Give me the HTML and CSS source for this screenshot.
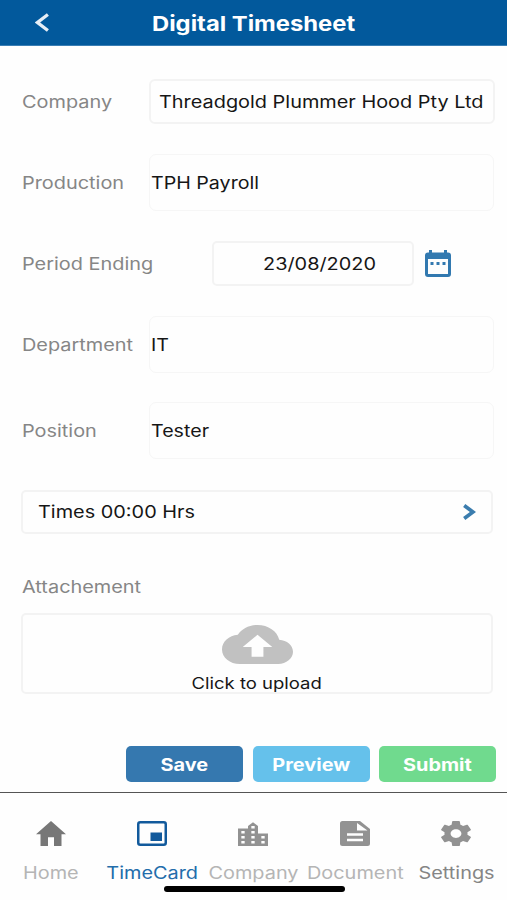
FILE: index.html
```
<!DOCTYPE html>
<html lang="en">
<head>
<meta charset="utf-8">
<title>Digital Timesheet</title>
<link rel="stylesheet" href="styles.css">
</head>
<body>
<div class="app">
  <header class="header">
    <svg class="back" viewBox="0 0 14 19" preserveAspectRatio="none"><path d="M12.900 1.500 2.500 9.500l10.400 8" fill="none" stroke="#e6eef6" stroke-width="3.300"/></svg>
    <h1 class="title"><span class="wide">Digital Timesheet</span></h1>
  </header>

  <main class="form">
    <div class="row">
      <label class="label"><span class="wide left">Company</span></label>
      <div class="field select"><span class="wide left">Threadgold Plummer Hood Pty Ltd</span></div>
    </div>
    <div class="row">
      <label class="label"><span class="wide left">Production</span></label>
      <div class="field tall"><span class="wide left">TPH Payroll</span></div>
    </div>
    <div class="row period">
      <label class="label"><span class="wide left">Period Ending</span></label>
      <div class="field date"><span class="wide left">23/08/2020</span></div>
      <svg class="calendar" viewBox="0 0 26 27" preserveAspectRatio="none">
        <path fill="#3279b0" fill-rule="evenodd" d="M4 0h3v2.5h12V0h3v2.5h1a3 3 0 0 1 3 3V24a3 3 0 0 1-3 3H3a3 3 0 0 1-3-3V5.500a3 3 0 0 1 3-3h1zM3 9v15h20V9z"/>
        <path fill="#3279b0" d="M5.500 12h3v3h-3zM11.500 12h3v3h-3zM17.500 12h3v3h-3z"/>
      </svg>
    </div>
    <div class="row">
      <label class="label"><span class="wide left">Department</span></label>
      <div class="field tall"><span class="wide left">IT</span></div>
    </div>
    <div class="row position">
      <label class="label"><span class="wide left">Position</span></label>
      <div class="field tall"><span class="wide left">Tester</span></div>
    </div>
    <div class="times">
      <span class="wide left">Times 00:00 Hrs</span>
      <svg class="chevron" viewBox="0 0 13 16" preserveAspectRatio="none"><path d="M1.200 1.500 10 8l-8.800 6.500" fill="none" stroke="#3b7dae" stroke-width="3.700"/></svg>
    </div>
    <div class="attach-label"><span class="wide left">Attachement</span></div>
    <div class="upload">
      <svg class="cloud" viewBox="0 4 24 16" preserveAspectRatio="none"><path fill="#c1c1c1" d="M19.350 10.040C18.670 6.590 15.640 4 12 4 9.110 4 6.600 5.640 5.350 8.040 2.340 8.360 0 10.910 0 14c0 3.310 2.690 6 6 6h13c2.760 0 5-2.240 5-5 0-2.640-2.050-4.780-4.650-4.960zM14 13v4h-4v-4H7l5-5 5 5h-3z"/></svg>
      <span class="wide upload-text">Click to upload</span>
    </div>
    <div class="actions">
      <button class="btn save"><span class="wide">Save</span></button>
      <button class="btn preview"><span class="wide">Preview</span></button>
      <button class="btn submit"><span class="wide">Submit</span></button>
    </div>
  </main>

  <nav class="tabs">
    <a class="tab">
      <svg class="icon home" viewBox="2 3 20 17" preserveAspectRatio="none"><path fill="#777" d="M10 20v-6h4v6h5v-8h3L12 3 2 12h3v8z"/></svg>
      <span class="wide">Home</span>
    </a>
    <a class="tab active">
      <svg class="icon" viewBox="0 0 30 25" preserveAspectRatio="none"><rect x="1.250" y="1.250" width="27.500" height="22.500" rx="2" fill="none" stroke="#125a9c" stroke-width="2.500"/><path fill="#125a9c" d="M13.500 11.500h11.500v8.500H13.500z"/></svg>
      <span class="wide">TimeCard</span>
    </a>
    <a class="tab">
      <svg class="icon" viewBox="3 1 18 20" preserveAspectRatio="none"><path fill="#929292" fill-rule="evenodd" d="M15 11V5l-3-3-3 3v2H3v14h18V11zM7 19H5v-2h2zm0-4H5v-2h2zm0-4H5V9h2zm6 8h-2v-2h2zm0-4h-2v-2h2zm0-4h-2V9h2zm0-4h-2V5h2zm6 12h-2v-2h2zm0-4h-2v-2h2z"/></svg>
      <span class="wide">Company</span>
    </a>
    <a class="tab">
      <svg class="icon" viewBox="0 0 30 25" preserveAspectRatio="none"><path fill="#929292" fill-rule="evenodd" d="M2.500 0H20l10 8v14.500a2.500 2.500 0 0 1-2.500 2.500h-25A2.500 2.500 0 0 1 0 22.500v-20A2.500 2.500 0 0 1 2.500 0zM17 2v7.500h10.500zM7 12.300v2.500h16v-2.500zm0 5.400v2.500h16v-2.500z"/></svg>
      <span class="wide">Document</span>
    </a>
    <a class="tab settings">
      <svg class="icon" viewBox="2.250 2 19.500 20" preserveAspectRatio="none"><path fill="#929292" d="M19.430 12.980c.04-.32.07-.64.07-.98s-.03-.66-.07-.98l2.110-1.650c.19-.15.24-.42.12-.64l-2-3.460c-.12-.22-.39-.3-.61-.22l-2.490 1c-.52-.4-1.080-.73-1.690-.98l-.38-2.650C14.460 2.180 14.250 2 14 2h-4c-.25 0-.46.18-.49.42l-.38 2.650c-.61.25-1.170.59-1.690.98l-2.490-1c-.23-.09-.49 0-.61.22l-2 3.460c-.13.22-.07.49.12.64l2.110 1.650c-.04.32-.07.65-.07.98s.03.66.07.98l-2.110 1.650c-.19.15-.24.42-.12.64l2 3.460c.12.22.39.3.61.22l2.490-1c.52.4 1.080.73 1.690.98l.38 2.650c.03.24.24.42.49.42h4c.25 0 .46-.18.49-.42l.38-2.650c.61-.25 1.170-.59 1.690-.98l2.490 1c.23.09.49 0 .61-.22l2-3.460c.12-.22.07-.49-.12-.64zM12 15.500c-1.930 0-3.500-1.570-3.500-3.500s1.570-3.500 3.500-3.500 3.500 1.570 3.500 3.500-1.570 3.500-3.500 3.500z"/></svg>
      <span class="wide">Settings</span>
    </a>
    <div class="home-indicator"></div>
  </nav>
</div>
</body>
</html>
```
FILE: styles.css
```
* { box-sizing: border-box; }

body {
  margin: 0;
  background: #fefefe;
  font: 17px/20px Inter, "Liberation Sans", sans-serif;
  color: #161616;
}

.app {
  width: 507px;
  height: 900px;
  display: flex;
  flex-direction: column;
  overflow: hidden;
}

.app svg { display: block; flex: none; }

/* Labels use a horizontally expanded face. */
.wide {
  display: inline-block;
  white-space: nowrap;
  transform: scaleX(1.17);
}

.left { transform-origin: left center; }

.header {
  height: 46px;
  flex: none;
  display: grid;
  grid-template-columns: 60px 1fr 60px;
  align-items: center;
  background: #02599c;
  border-bottom: 1px solid #3a7eb4;
}

.back { width: 14px; height: 19px; margin-left: 35px; }

.title {
  margin: 0 0 0 1px;
  padding-top: 2px;
  color: #fff;
  font-size: 20.5px;
  line-height: 24px;
  font-weight: 700;
  text-align: center;
}

.title .wide { transform: scaleX(1.16); }

.form {
  height: 746px;
  flex: none;
  display: flex;
  flex-direction: column;
  padding: 33px 11px 0 21px;
}

.row {
  display: grid;
  grid-template-columns: 128px 345px;
  align-items: center;
  margin-bottom: 30px;
}

.label, .attach-label { color: #868686; padding-left: 0.5px; }

.field {
  height: 45px;
  display: flex;
  align-items: center;
  border: 2px solid #f3f3f3;
  border-radius: 6px;
}

.select { width: 346px; padding-left: 8px; }

.tall {
  height: 57px;
  border: 1.500px solid #f6f6f6;
  border-radius: 7px;
  padding-left: 1px;
}

.tall .wide { transform: scaleX(1.155); }

.period { grid-template-columns: 191px 202px 26px; }

.date { padding-left: 49px; border-radius: 5px; }

.calendar { width: 26px; height: 27px; margin-left: 11px; }

.position { margin: -1px 0 31px; }

.times {
  width: 472px;
  height: 44px;
  display: flex;
  align-items: center;
  justify-content: space-between;
  padding: 0 15px 0 14.500px;
  border: 2px solid #f3f3f3;
  border-radius: 5px;
}

.chevron { width: 13px; height: 16px; }

.attach-label { margin: 43px 0 16px; }

.upload {
  width: 472px;
  height: 81px;
  display: flex;
  flex-direction: column;
  align-items: center;
  padding-top: 10px;
  border: 2px solid #f3f3f3;
  border-radius: 5px;
}

.cloud { width: 71px; height: 39px; }

.upload-text { font-size: 15.800px; margin-top: 10px; }

.actions {
  display: grid;
  grid-template-columns: repeat(3, 117px);
  justify-content: end;
  gap: 9.500px;
  margin-top: 52px;
}

.btn {
  height: 36px;
  padding: 2px 0 0;
  border: 0;
  border-radius: 5px;
  color: #fff;
  font: 700 17px/20px Inter, "Liberation Sans", sans-serif;
}

.save { background: #3578af; }
.preview { background: #65c1eb; }
.submit { background: #70da8e; }

.tabs {
  position: relative;
  flex: 1;
  display: grid;
  grid-template-columns: repeat(5, 1fr);
  border-top: 1.500px solid #555;
}

.tab {
  display: flex;
  flex-direction: column;
  align-items: center;
  gap: 17px;
  padding-top: 28px;
  color: #b5b5b5;
}

.icon { width: 30px; height: 25px; }

.active { color: #236dab; }

.settings { color: #858585; }

.home-indicator {
  position: absolute;
  left: 164px;
  top: 93px;
  width: 181px;
  height: 6px;
  border-radius: 3px;
  background: #000;
}
```
